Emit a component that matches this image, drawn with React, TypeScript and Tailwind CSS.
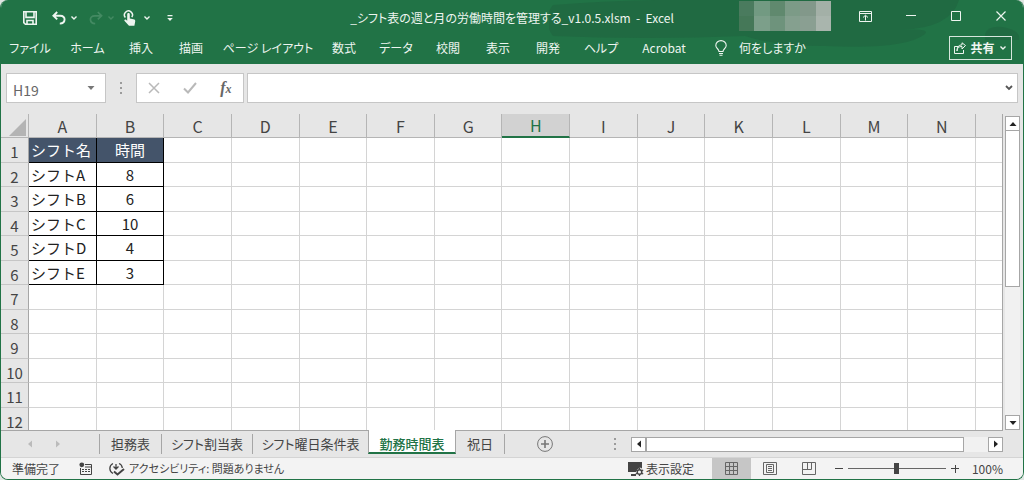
import React, { useState } from "react";

const ribbonTabs = [
  { label: "ファイル", width: "w-[58px]" },
  { label: "ホーム", width: "w-[57px]" },
  { label: "挿入", width: "w-[50px]" },
  { label: "描画", width: "w-[50px]" },
  { label: "ページ レイアウト", width: "w-[104px]" },
  { label: "数式", width: "w-[48px]" },
  { label: "データ", width: "w-[56px]" },
  { label: "校閲", width: "w-[48px]" },
  { label: "表示", width: "w-[52px]" },
  { label: "開発", width: "w-[48px]" },
  { label: "ヘルプ", width: "w-[58px]" },
  { label: "Acrobat", width: "w-[68px]" },
];

const columns = "ABCDEFGHIJKLMN".split("");

const shifts = [
  ["シフト名", "時間"],
  ["シフトA", "8"],
  ["シフトB", "6"],
  ["シフトC", "10"],
  ["シフトD", "4"],
  ["シフトE", "3"],
];

const sheets = [
  { label: "担務表", width: "w-[62px]" },
  { label: "シフト割当表", width: "w-[91px]" },
  { label: "シフト曜日条件表", width: "w-[116px]" },
  { label: "勤務時間表", width: "w-[88px]" },
  { label: "祝日", width: "w-[49px]" },
];

// Blurred account name in the title bar
const mosaic = [
  "bg-[#4a7b5e]", "bg-[#729a82]", "bg-[#60896e]", "bg-[#7c9b87]", "bg-[#82988a]", "bg-[#a3b0a7]",
  "bg-[#457858]", "bg-[#7c9f8a]", "bg-[#6e937c]", "bg-[#85a08f]", "bg-[#8a9f92]", "bg-[#a9b5ad]",
];

const Chevron = ({ className = "" }: { className?: string }) => (
  <svg viewBox="0 0 8 6" className={`w-2 h-1.5 ${className}`} fill="none" stroke="currentColor" strokeWidth="1.4">
    <path d="M1.5 1.5 4 4l2.5-2.5" />
  </svg>
);

const Triangle = ({ className = "" }: { className?: string }) => (
  <svg viewBox="0 0 8 8" className={`w-2 h-2 ${className}`} fill="currentColor">
    <path d="M4 2 7.5 6h-7z" />
  </svg>
);

const Dots = () => (
  <svg viewBox="0 0 2 12" className="w-0.5 h-3" fill="#9b9b9b">
    <path d="M0 0h2v2H0zM0 5h2v2H0zM0 10h2v2H0z" />
  </svg>
);

const TitleBar = () => (
  <header className="relative h-8 shrink-0 flex items-center">
    {/* Faint brush strokes of the theme background */}
    <svg
      className="absolute right-0 top-0 w-[474px] h-16"
      viewBox="0 0 474 64"
      fill="#20643f"
      fillOpacity="0.6"
      aria-hidden="true"
    >
      <path d="M4 5Q90-2 200 0h210Q402 28 352 30q30-2 24 4-20 16-100 12-50 0-80-10-100 4-192 0-12-16 0-31z" />
      <path d="M436 34q4-10 22-6 14 4 12 12h-34z" />
    </svg>
    <div className="relative flex items-center w-[200px] pl-[22px] pt-[3px]">
      <button aria-label="上書き保存">
        <svg viewBox="0 0 14 14" className="w-3.5 h-3.5" fill="none" stroke="currentColor" strokeWidth="1.6">
          <path d="M.8.8h12.4v12.4H2.4L.8 11.6zM3 1v5.4h8V1M4 13V9.5h6V13" />
        </svg>
      </button>
      <button aria-label="元に戻す" className="ml-[15px]">
        <svg viewBox="0 0 14 14" className="w-3.5 h-3.5" fill="none" stroke="currentColor" strokeWidth="1.9">
          <path d="M5.2 1 1.4 4.8l3.8 3.6M1.8 4.8h6.4c6.2 0 5.6 7.6-.4 7.8" />
        </svg>
      </button>
      <Chevron className="ml-1" />
      <button aria-label="やり直し" className="ml-[11px] text-[#5a9a76] opacity-60" disabled>
        <svg viewBox="0 0 14 14" className="w-3.5 h-3.5" fill="none" stroke="currentColor" strokeWidth="1.7">
          <path d="m8.8 1 3.8 3.8-3.8 3.6M12.2 4.8H5.8c-6.2 0-5.6 7.6.4 7.8" />
        </svg>
      </button>
      <Chevron className="ml-1 text-[#5a9a76] opacity-60" />
      <button aria-label="タッチ/マウス モードの切り替え" className="ml-2">
        <svg viewBox="0 0 14 16" className="w-3.5 h-4">
          <path d="M2.4 7.6a4 4 0 1 1 6.4-.4" fill="none" stroke="currentColor" strokeWidth="1.5" />
          <path
            d="M4.2 4.4c0-1.8 2.6-1.8 2.6 0v4l3.6.8c1.6.4 2 1 1.8 2.4l-.8 4.2H6L1.6 11c-.8-1 .4-2 1.4-1.2l1.2 1z"
            fill="currentColor"
          />
        </svg>
      </button>
      <Chevron className="ml-1.5" />
      <button aria-label="クイック アクセス ツール バーのカスタマイズ" className="ml-[15px]">
        <svg viewBox="0 0 8 8" className="w-2 h-2" fill="currentColor">
          <path d="M1.5 1h5v1.2h-5zM1.2 4h5.6L4 7z" />
        </svg>
      </button>
    </div>
    <h1 className="relative flex-1 text-center text-xs pt-1 whitespace-pre">
      _シフト表の週と月の労働時間を管理する_v1.0.5.xlsm{"  -  "}Excel
    </h1>
    <div className="relative flex items-center w-[200px] h-8">
      <div className="absolute right-[192px] top-px grid grid-cols-6 w-[92px] h-[30px]" aria-hidden="true">
        {mosaic.map((color, i) => (
          <span key={i} className={color} />
        ))}
      </div>
      <button aria-label="リボンの表示オプション" className="ml-9">
        <svg viewBox="0 0 13 11" className="w-[13px] h-[11px]" fill="none" stroke="currentColor">
          <path d="M.5.5h12v10H.5zM.5 2.500h12M6.500 9.500V4.500M4 6.500l2.500-2.300L9 6.500" />
        </svg>
      </button>
      <button aria-label="最小化" className="ml-[34px]">
        <svg viewBox="0 0 10 10" className="w-2.5 h-2.5" stroke="currentColor">
          <path d="M0 4.500h10" />
        </svg>
      </button>
      <button aria-label="最大化" className="ml-[35px]">
        <svg viewBox="0 0 10 10" className="w-2.5 h-2.5" fill="none" stroke="currentColor">
          <path d="M.5.5h9v9h-9z" />
        </svg>
      </button>
      <button aria-label="閉じる" className="ml-[35px]">
        <svg viewBox="0 0 10 10" className="w-2.5 h-2.5" stroke="currentColor" strokeWidth="1.2">
          <path d="m.5.5 9 9M9.500.5l-9 9" />
        </svg>
      </button>
    </div>
  </header>
);

const Ribbon = () => (
  <nav className="relative h-8 shrink-0 flex items-center text-xs">
    {ribbonTabs.map((tab) => (
      <button key={tab.label} className={`${tab.width} shrink-0 h-8 text-center whitespace-nowrap`}>
        {tab.label}
      </button>
    ))}
    <button className="flex items-center gap-3 ml-[17px] whitespace-nowrap">
      <svg viewBox="0 0 12 16" className="w-3 h-4" fill="none" stroke="currentColor" strokeWidth="1.1">
        <path d="M4 11.500C4 9 .8 8.400.8 5.400a5.200 4.800 0 0 1 10.400 0C11.200 8.400 8 9 8 11.500zM4 13.500h4M4.500 15.300h3" />
      </svg>
      何をしますか
    </button>
    <button className="ml-auto mr-[11px] flex items-center justify-center gap-1 w-[63px] h-6 border border-[#d7e6dd] font-bold text-xs">
      <svg viewBox="0 0 12 12" className="w-3 h-3" fill="none" stroke="currentColor">
        <path d="M4.500 4.500h-4v7h9V8M3 9c.3-3.500 2-4.500 5-4.500V7l3.500-3.500L8 .8v2C4.500 3 3 5 3 9z" />
      </svg>
      共有
      <Chevron />
    </button>
  </nav>
);

const FormulaBar = () => (
  <div className="h-[50px] shrink-0 flex items-start pt-[9px] pl-[5px] pr-[5px] text-[#666]">
    <div className="flex items-center w-[100px] h-[30px] bg-white border border-[#c6c6c6]">
      <input
        aria-label="名前ボックス"
        defaultValue="H19"
        className="w-20 pl-1.5 pt-1 text-sm outline-none"
      />
      <button aria-label="名前の一覧">
        <Triangle className="rotate-180 text-[#777]" />
      </button>
    </div>
    <div className="w-[30px] h-[30px] flex items-center justify-center">
      <Dots />
    </div>
    <div className="flex items-center justify-around w-[108px] h-[30px] bg-white border border-[#c6c6c6]">
      <button aria-label="キャンセル" className="text-[#b9b9b9]">
        <svg viewBox="0 0 12 12" className="w-3 h-3" stroke="currentColor" strokeWidth="1.500">
          <path d="m1 1 10 10M11 1 1 11" />
        </svg>
      </button>
      <button aria-label="入力" className="text-[#b9b9b9]">
        <svg viewBox="0 0 14 12" className="w-3.5 h-3" fill="none" stroke="currentColor" strokeWidth="2">
          <path d="m1 6.500 4 4L13 1" />
        </svg>
      </button>
      <button
        aria-label="関数の挿入"
        className="font-['Liberation_Serif',serif] italic font-bold text-base leading-4"
      >
        f<span className="text-xs">x</span>
      </button>
    </div>
    <div className="flex-1 flex items-center ml-[3px] pr-1 h-[30px] bg-white border border-[#c6c6c6]">
      <input aria-label="数式バー" className="flex-1 min-w-0 px-2 text-sm outline-none" />
      <button aria-label="数式バーの展開" className="text-[#555]">
        <svg viewBox="0 0 8 6" className="w-2 h-1.5" fill="none" stroke="currentColor" strokeWidth="1.800">
          <path d="M1 1 4 4l3-3" />
        </svg>
      </button>
    </div>
  </div>
);

const cellStyle = (row: number, col: number) => {
  if (row >= shifts.length || col > 1) return "border-[#d4d4d4] bg-white";
  if (row === 0) return "border-black bg-[#44546a] text-white";
  return "border-black bg-white text-[#222]";
};

const Grid = () => (
  <div className="flex-1 min-h-0 flex">
    <div className="flex-1 min-w-0 overflow-hidden border-r border-[#a6a6a6]">
      <table className="w-full table-fixed border-separate border-spacing-0 text-[15px] leading-[18px] [font-feature-settings:normal]">
        <thead>
          <tr className="h-6 text-base leading-[18px] text-[#444]">
            <th className="w-7 border-r border-b border-[#b5b5b5]">
              <svg viewBox="0 0 17 17" className="ml-2 mt-1 w-[17px] h-[17px]" fill="#b4b4b4">
                <path d="M17 0v17H0z" />
              </svg>
            </th>
            {columns.map((name) => (
              <th
                key={name}
                scope="col"
                className={
                  name === "H"
                    ? "border-r border-b-2 border-r-[#b5b5b5] border-b-[#217346] bg-[#d2d2d2] font-normal text-[#217346]"
                    : "border-r border-b border-[#b5b5b5] font-normal"
                }
              >
                {name}
              </th>
            ))}
            <th className="w-[26px] border-b border-[#b5b5b5]" />
          </tr>
        </thead>
        <tbody>
          {Array.from({ length: 12 }, (_, row) => (
            <tr key={row} className={row % 2 === 0 ? "h-[25px]" : "h-6"}>
              <th
                scope="row"
                className="border-r border-b border-r-[#a6a6a6] border-b-[#c6c6c6] pt-1 bg-[#e6e6e6] font-normal text-[#444]"
              >
                {row + 1}
              </th>
              {columns.map((name, col) => (
                <td
                  key={name}
                  className={`border-r border-b whitespace-nowrap ${
                    col === 0 ? "pl-[2px]" : "text-center"
                  } ${cellStyle(row, col)}`}
                >
                  {shifts[row]?.[col]}
                </td>
              ))}
              <td className="border-b border-[#d4d4d4] bg-white" />
            </tr>
          ))}
        </tbody>
      </table>
    </div>
    <div className="w-5 shrink-0 flex flex-col pl-0.5 pr-[3px] pt-0.5 text-[#222]">
      <button aria-label="上へスクロール" className="h-[15px] flex items-center justify-center bg-white border border-[#a6a6a6]">
        <Triangle />
      </button>
      <div className="flex-1 bg-[#f1f1f1]">
        <div className="h-[55%] bg-white border border-t-0 border-[#a6a6a6]" />
      </div>
      <button aria-label="下へスクロール" className="h-[15px] flex items-center justify-center bg-white border border-[#a6a6a6]">
        <Triangle className="rotate-180" />
      </button>
    </div>
  </div>
);

const SheetTabs = () => {
  const [active, setActive] = useState("勤務時間表");

  return (
    <div className="h-[27px] shrink-0 flex items-start text-[#444]">
      <div className="flex items-center w-[98px] h-[27px] pl-[25px] gap-5 border-t border-[#a6a6a6] text-[#bbb]">
        <button aria-label="前のシート">
          <Triangle className="-rotate-90" />
        </button>
        <button aria-label="次のシート">
          <Triangle className="rotate-90" />
        </button>
      </div>
      {sheets.map((sheet) => (
        <button
          key={sheet.label}
          onClick={() => setActive(sheet.label)}
          className={`${sheet.width} shrink-0 whitespace-nowrap text-[13px] leading-5 ${
            sheet.label === active
              ? "h-6 pt-1 bg-white border-x border-b-2 border-x-[#a6a6a6] border-b-[#217346] font-medium text-[#217346]"
              : "h-[27px] border-t border-[#a6a6a6]"
          }`}
        >
          <span
            className={
              sheet.label === active
                ? "block"
                : sheet.label === "祝日"
                  ? "block border-r border-[#a6a6a6]"
                  : "block border-l border-[#a6a6a6]"
            }
          >
            {sheet.label}
          </span>
        </button>
      ))}
      <div className="flex-1 flex items-center h-[27px] border-t border-[#a6a6a6]">
        <button aria-label="新しいシート" className="ml-8 text-[#777]">
          <svg viewBox="0 0 16 16" className="w-4 h-4" fill="none" stroke="currentColor">
            <circle cx="8" cy="8" r="7.400" />
            <path d="M8 4v8M4 8h8" strokeWidth="1.600" />
          </svg>
        </button>
        <div className="ml-[61px] mr-[15px]">
          <Dots />
        </div>
        <button aria-label="左へスクロール" className="w-[15px] h-[15px] flex items-center justify-center bg-white border border-[#a6a6a6] text-[#222]">
          <Triangle className="-rotate-90" />
        </button>
        <div className="flex-1 h-[15px] bg-[#f1f1f1]">
          <div className="w-[93%] h-[15px] bg-white border border-[#a6a6a6]" />
        </div>
        <button aria-label="右へスクロール" className="w-[15px] h-[15px] flex items-center justify-center bg-white border border-[#a6a6a6] text-[#222]">
          <Triangle className="rotate-90" />
        </button>
      </div>
      <div className="w-5 shrink-0" />
    </div>
  );
};

const StatusBar = () => {
  const [zoom, setZoom] = useState(100);

  return (
    <footer className="h-[22px] shrink-0 flex items-center bg-[#f3f3f3] border-t border-[#d4d4d4] text-xs text-[#444] whitespace-nowrap">
      <span className="w-[78px] pl-[11px]">準備完了</span>
      <button aria-label="マクロの記録">
        <svg viewBox="0 0 13 13" className="w-[13px] h-[13px]" fill="none" stroke="currentColor">
          <path d="M6 2.500h6.500v10H1.500V6M3 7.500h2m1 0h2m1 0h2M3 9.500h2m1 0h2m1 0h2M6 5h6" />
          <circle cx="2.800" cy="2.800" r="2.400" fill="currentColor" stroke="none" />
        </svg>
      </button>
      <button className="flex items-center gap-1 ml-[17px] text-[11px]">
        <svg viewBox="0 0 16 14" className="w-4 h-3.5" fill="none" stroke="currentColor" strokeWidth="1.300">
          <path d="M4 1.500C-.2 3.500-.2 9.500 4 11.500M10 1.500c2 .8 3.200 2.300 3.300 4.500M7 2v5M4.500 4.500 7 7l2.500-2.500" />
          <path d="m5 9.500 3.500 3L15 7" strokeWidth="2" />
        </svg>
        アクセシビリティ: 問題ありません
      </button>
      <button className="flex items-center gap-0.5 ml-auto mr-[18px]">
        <svg viewBox="0 0 16 14" className="w-4 h-3.5">
          <path d="M0 0h14v6.500l-2-1-4 3V10H0zM3 12h5v2H3z" fill="currentColor" />
          <circle cx="11.500" cy="10" r="2.300" fill="none" stroke="currentColor" strokeWidth="1.500" />
          <path
            d="M11.500 6v1.500M11.500 12.500V14M7.800 8l1.500.8M13.700 11.200l1.500.8M7.800 12l1.500-.8M13.700 8.800l1.500-.8"
            stroke="currentColor"
            strokeWidth="1.300"
          />
        </svg>
        表示設定
      </button>
      <button aria-label="標準" className="w-[39px] h-[21px] flex items-center justify-center bg-[#c6c6c6]">
        <svg viewBox="0 0 13 13" className="w-[13px] h-[13px]" fill="none" stroke="#666">
          <path d="M.5.5h12v12H.5zM.5 4.500h12M.5 8.500h12M4.500.5v12M8.500.5v12" />
        </svg>
      </button>
      <button aria-label="ページ レイアウト" className="w-[39px] h-[21px] flex items-center justify-center">
        <svg viewBox="0 0 14 13" className="w-3.5 h-[13px]" fill="none" stroke="#666">
          <path d="M.5.5h13v12H.5zM3.500 2.500h7v8h-7zM5 4.500h4M5 6.500h4M5 8.500h4" />
        </svg>
      </button>
      <button aria-label="改ページ プレビュー" className="w-[39px] h-[21px] flex items-center justify-center">
        <svg viewBox="0 0 14 13" className="w-3.5 h-[13px]" fill="none" stroke="#666">
          <path d="M.5.5h13v12H.5zM5.500.5v7M9.500.5v7M.5 7.500h9" />
        </svg>
      </button>
      <button aria-label="縮小" className="ml-1.5">
        <svg viewBox="0 0 8 8" className="w-2 h-2" stroke="currentColor">
          <path d="M0 3.500h8" />
        </svg>
      </button>
      <input
        type="range"
        aria-label="ズーム"
        min={0}
        max={200}
        value={zoom}
        onChange={(e) => setZoom(Number(e.target.value))}
        className="mx-[5px] w-[98px] h-[11px] appearance-none bg-transparent [&::-webkit-slider-runnable-track]:h-px [&::-webkit-slider-runnable-track]:bg-[#666] [&::-webkit-slider-thumb]:appearance-none [&::-webkit-slider-thumb]:-mt-[5px] [&::-webkit-slider-thumb]:w-[5px] [&::-webkit-slider-thumb]:h-[11px] [&::-webkit-slider-thumb]:bg-[#444]"
      />
      <button aria-label="拡大">
        <svg viewBox="0 0 8 8" className="w-2 h-2" stroke="currentColor">
          <path d="M0 3.500h8M4.500 0v8" />
        </svg>
      </button>
      <button className="ml-[13px] mr-5">{zoom}%</button>
    </footer>
  );
};

export default function App() {
  return (
    <div className="h-screen bg-[#dfe6e2] font-['Noto_Sans_CJK_JP',sans-serif] [font-feature-settings:'palt']">
      <div className="h-full flex flex-col overflow-hidden rounded-lg border border-t-0 border-[#217346] bg-[#e6e6e6]">
        <div className="shrink-0 bg-[#217346] text-[#eef5f0]">
          <TitleBar />
          <Ribbon />
        </div>
        <FormulaBar />
        <Grid />
        <SheetTabs />
        <StatusBar />
      </div>
    </div>
  );
}
